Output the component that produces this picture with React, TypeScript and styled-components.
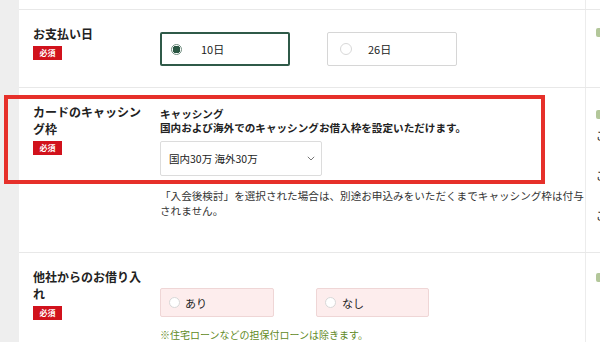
import React from "react";
import styled, { createGlobalStyle } from "styled-components";

const Global = createGlobalStyle`
  html, body { margin: 0; padding: 0; background: #eeeeee; overflow: hidden; }
  body { font-family: "Noto Sans CJK JP", "Noto Sans", "Liberation Sans", sans-serif; color: #222; }
  * { box-sizing: border-box; }
`;

const Page = styled.div`
  position: relative;
  display: flex;
  align-items: flex-start;
  width: 600px;
  height: 342px;
  overflow: hidden;
  background: #eeeeee;
`;

const Gutter = styled.div`
  flex: 0 0 19px;
`;

const Table = styled.div`
  flex: 0 0 800px;
  display: flex;
  flex-direction: column;
  background: #fff;
`;

const Row = styled.div<{ $height?: number }>`
  flex: 0 0 auto;
  display: grid;
  grid-template-columns: 141px 425px 1fr;
  border-top: 1px solid #e8e8e8;
  ${(p) => (p.$height ? `height: ${p.$height}px;` : "")}
  &:first-child { border-top: none; }
`;

const LabelCell = styled.div`
  padding: 15px 0 0 14px;
`;

const LabelText = styled.div`
  width: 114px;
  font-size: 12px;
  line-height: 17px;
  font-weight: 700;
  color: #222;
`;

const Badge = styled.div`
  display: flex;
  align-items: center;
  justify-content: center;
  margin-top: 4px;
  width: 29px;
  height: 14px;
  background: #d1121c;
  color: #fff;
  font-size: 8px;
  line-height: 1;
  font-weight: 700;
`;

const ContentCell = styled.div<{ $pt: number; $pb: number }>`
  padding: ${(p) => p.$pt}px 0 ${(p) => p.$pb}px 0;
`;

const SideCell = styled.div<{ $pt: number }>`
  border-left: 1px solid #ececec;
  padding: ${(p) => p.$pt}px 0 0 10px;
`;

const SideIcon = styled.div`
  width: 10px;
  height: 9px;
  border-radius: 2px;
  background: #b3c79a;
`;

const SideText = styled.div<{ $mt: number }>`
  margin-top: ${(p) => p.$mt}px;
  font-size: 11px;
  line-height: 16px;
  white-space: nowrap;
  color: #222;
`;

const OptionRow = styled.div<{ $gap: number }>`
  display: flex;
  gap: ${(p) => p.$gap}px;
`;

const BigOption = styled.div<{ $selected?: boolean }>`
  display: flex;
  align-items: center;
  width: 130px;
  height: 34px;
  padding-left: ${(p) => (p.$selected ? 9 : 12)}px;
  border: ${(p) => (p.$selected ? "2px solid #2f5a48" : "1px solid #d6d6d6")};
  border-radius: 2px;
  background: #fff;
  font-size: 11px;
  color: #222;
`;

const Radio = styled.span<{ $selected?: boolean; $size: number }>`
  flex: 0 0 auto;
  width: ${(p) => p.$size}px;
  height: ${(p) => p.$size}px;
  border-radius: 50%;
  border: 1px solid ${(p) => (p.$selected ? "#6f8c7e" : "#d8d8d8")};
  background: ${(p) =>
    p.$selected ? "radial-gradient(circle, #2a5743 0 3.6px, #ffffff 4px)" : "#fff"};
`;

const OptionLabel = styled.span<{ $ml: number }>`
  margin-left: ${(p) => p.$ml}px;
`;

const SmallOption = styled.div<{ $w: number }>`
  display: flex;
  align-items: center;
  width: ${(p) => p.$w}px;
  height: 29px;
  padding-left: 8px;
  border: 1px solid #efd6d6;
  border-radius: 2px;
  background: #fdeded;
  font-size: 11px;
  color: #222;
`;

const Heading = styled.div`
  font-size: 10.6px;
  line-height: 14px;
  font-weight: 700;
  white-space: nowrap;
`;

const Select = styled.div`
  display: flex;
  align-items: center;
  justify-content: space-between;
  margin-top: 6px;
  width: 162px;
  height: 35px;
  padding: 0 6px 0 8px;
  border: 1px solid #dcdcdc;
  border-radius: 2px;
  background: #fff;
  font-size: 10.5px;
  color: #222;
`;

const Note = styled.p`
  margin: 12px 0 0 0;
  width: 424px;
  font-size: 10.6px;
  line-height: 15px;
  color: #333;
`;

const GreenNote = styled.p`
  margin: 10px 0 0 0;
  font-size: 10px;
  line-height: 15px;
  color: #5f8a25;
  white-space: nowrap;
`;

const Highlight = styled.div`
  position: absolute;
  left: 4px;
  top: 95px;
  width: 541px;
  height: 89px;
  border: 4px solid #e6302a;
  pointer-events: none;
`;

const Chevron = () => (
  <svg width="8" height="5" viewBox="0 0 8 5">
    <polyline points="0.8,0.8 4,4 7.2,0.8" fill="none" stroke="#777" strokeWidth="1" />
  </svg>
);

export default function App() {
  return (
    <>
      <Global />
      <Page>
        <Gutter />
        <Table>
          <Row $height={9}>
            <div />
            <div />
            <SideCell $pt={0} />
          </Row>

          <Row>
            <LabelCell>
              <LabelText>お支払い日</LabelText>
              <Badge>必須</Badge>
            </LabelCell>
            <ContentCell $pt={22} $pb={21}>
              <OptionRow $gap={37}>
                <BigOption $selected>
                  <Radio $selected $size={11} />
                  <OptionLabel $ml={19}>10日</OptionLabel>
                </BigOption>
                <BigOption>
                  <Radio $size={12} />
                  <OptionLabel $ml={16}>26日</OptionLabel>
                </BigOption>
              </OptionRow>
            </ContentCell>
            <SideCell $pt={18}>
              <SideIcon />
            </SideCell>
          </Row>

          <Row>
            <LabelCell>
              <LabelText>カードのキャッシング枠</LabelText>
              <Badge>必須</Badge>
            </LabelCell>
            <ContentCell $pt={19} $pb={34}>
              <Heading>キャッシング</Heading>
              <Heading>国内および海外でのキャッシングお借入枠を設定いただけます。</Heading>
              <Select>
                <span>国内30万 海外30万</span>
                <Chevron />
              </Select>
              <Note>
                「入会後検討」を選択された場合は、別途お申込みをいただくまでキャッシング枠は付与されません。
              </Note>
            </ContentCell>
            <SideCell $pt={22}>
              <SideIcon />
              <SideText $mt={8}>ご利用可能枠</SideText>
              <SideText $mt={24}>ご利用可能枠</SideText>
              <SideText $mt={24}>ご利用可能枠</SideText>
            </SideCell>
          </Row>

          <Row>
            <LabelCell>
              <LabelText>他社からのお借り入れ</LabelText>
              <Badge>必須</Badge>
            </LabelCell>
            <ContentCell $pt={35} $pb={10}>
              <OptionRow $gap={42}>
                <SmallOption $w={114}>
                  <Radio $size={11} />
                  <OptionLabel $ml={5}>あり</OptionLabel>
                </SmallOption>
                <SmallOption $w={113}>
                  <Radio $size={11} />
                  <OptionLabel $ml={6}>なし</OptionLabel>
                </SmallOption>
              </OptionRow>
              <GreenNote>※住宅ローンなどの担保付ローンは除きます。</GreenNote>
            </ContentCell>
            <SideCell $pt={20}>
              <SideIcon />
            </SideCell>
          </Row>
        </Table>
        <Highlight />
      </Page>
    </>
  );
}
